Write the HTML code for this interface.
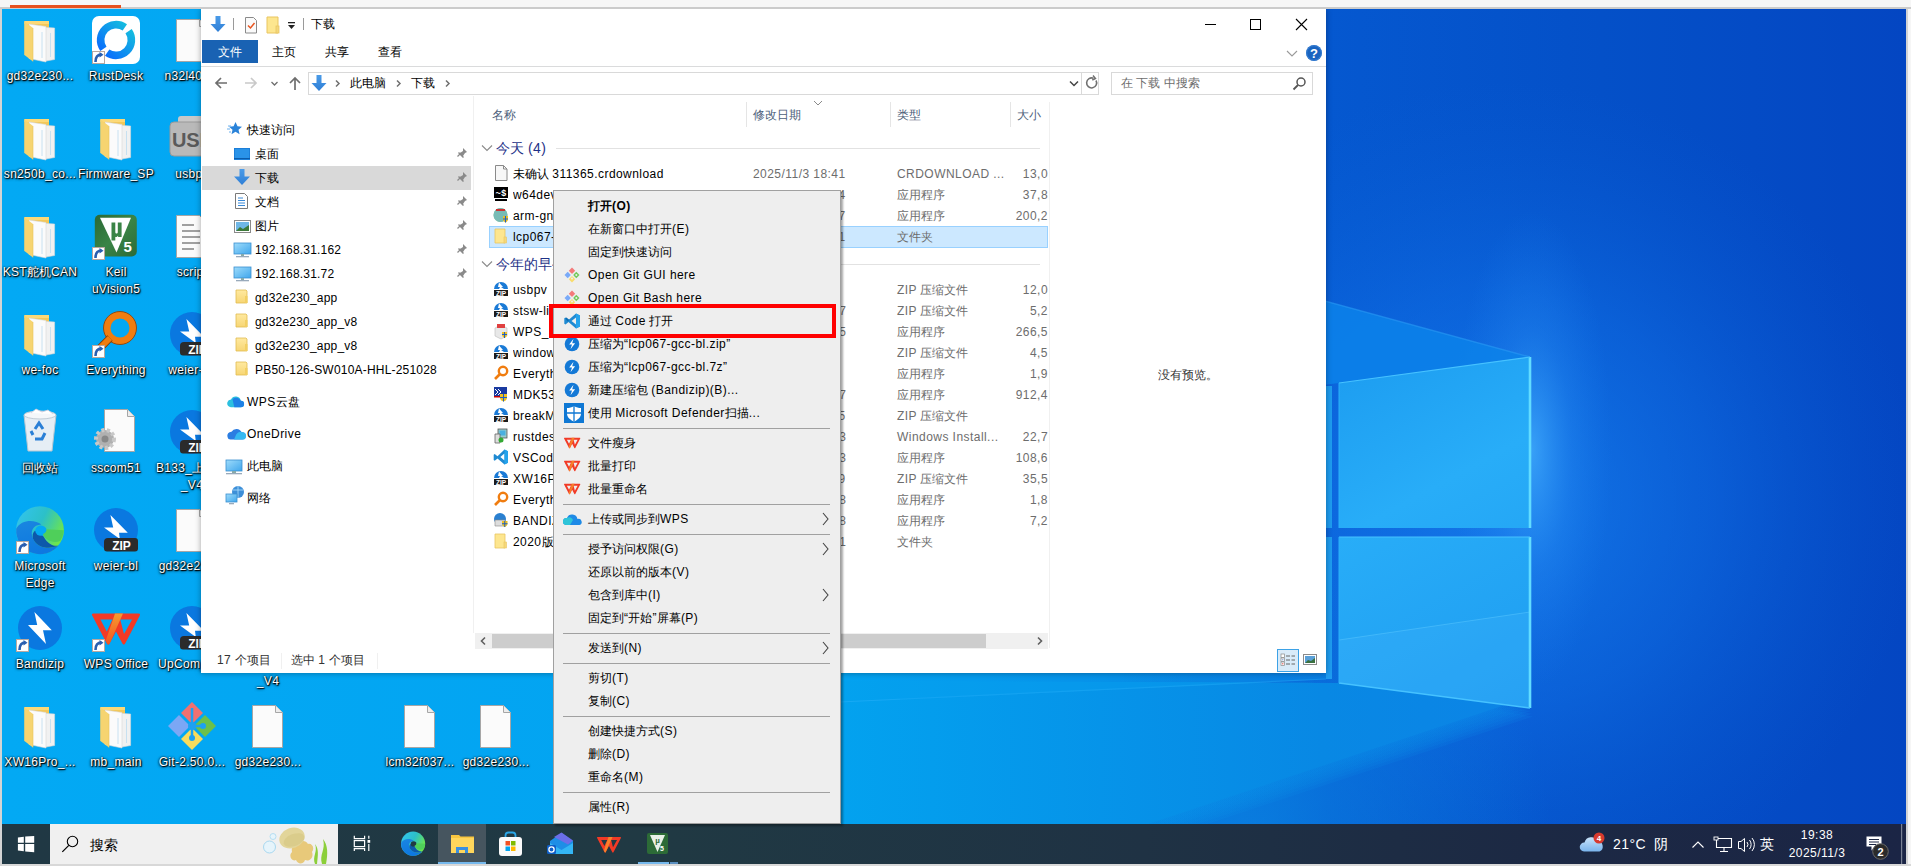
<!DOCTYPE html>
<html><head><meta charset="utf-8">
<style>
*{margin:0;padding:0;box-sizing:border-box}
html,body{width:1911px;height:866px;overflow:hidden;background:#f6f6f6;font-family:"Liberation Sans",sans-serif;font-size:12px;color:#000;letter-spacing:0}
.l{letter-spacing:0.45px}
.nv .l{letter-spacing:0.2px}
.dl .l{letter-spacing:0.3px}
.a{position:absolute}
.t{position:absolute;white-space:nowrap;line-height:16px}
.dl{position:absolute;width:80px;text-align:center;color:#fff;font-size:12px;line-height:17px;letter-spacing:0;text-shadow:0 0 2px #000,1px 1px 1px #000,0 1px 3px rgba(0,0,0,0.8)}
.nv{position:absolute;left:255px;white-space:nowrap;line-height:16px;letter-spacing:0;margin-top:1px}
.fr{position:absolute;white-space:nowrap;line-height:16px;margin-top:1px}
.g{color:#6d6d6d}
.mi{position:absolute;left:588px;white-space:nowrap;line-height:16px;color:#000}
.sep{position:absolute;left:563px;width:267px;height:1px;background:#a0a0a0}
.arr{position:absolute;left:821px;width:8px;height:8px;border-right:1px solid #333;border-top:1px solid #333;transform:rotate(45deg)}
</style></head><body>
<!-- top strip -->
<div class="a" style="left:0;top:7px;width:1911px;height:2px;background:#cbcbcb"></div>
<div class="a" style="left:10px;top:5px;width:111px;height:3px;background:#e8511d"></div>
<div class="a" style="left:1906px;top:8px;width:2px;height:856px;background:#d4d4d4"></div>

<!-- wallpaper -->
<svg class="a" style="left:2px;top:9px" width="1904" height="815" viewBox="2 9 1904 815">
<defs>
<linearGradient id="wb" x1="2" y1="0" x2="1906" y2="0" gradientUnits="userSpaceOnUse">
<stop offset="0" stop-color="#03a9f4"/>
<stop offset="0.445" stop-color="#03a2f0"/>
<stop offset="0.577" stop-color="#058ee6"/>
<stop offset="0.696" stop-color="#0558d0"/>
<stop offset="0.84" stop-color="#0450c8"/>
<stop offset="1" stop-color="#0446c2"/>
</linearGradient>
<linearGradient id="wdark" x1="0" y1="9" x2="0" y2="824" gradientUnits="userSpaceOnUse">
<stop offset="0" stop-color="#0448c4"/>
<stop offset="1" stop-color="#0a58cc"/>
</linearGradient>
<radialGradient id="glow" cx="1460" cy="520" r="330" gradientUnits="userSpaceOnUse">
<stop offset="0" stop-color="#2a9cff" stop-opacity="0.85"/>
<stop offset="0.45" stop-color="#1a80f0" stop-opacity="0.45"/>
<stop offset="1" stop-color="#1a80f0" stop-opacity="0"/>
</radialGradient>
<linearGradient id="pane" x1="1339" y1="357" x2="1530" y2="708" gradientUnits="userSpaceOnUse">
<stop offset="0" stop-color="#1c9cf0"/>
<stop offset="0.4" stop-color="#28adf8"/>
<stop offset="1" stop-color="#1e9cf0"/>
</linearGradient>
<linearGradient id="beamlo" x1="1530" y1="708" x2="1100" y2="824" gradientUnits="userSpaceOnUse">
<stop offset="0" stop-color="#1a9af0" stop-opacity="0.9"/>
<stop offset="1" stop-color="#0898ea" stop-opacity="0.6"/>
</linearGradient>
<filter id="bl" x="-10%" y="-10%" width="120%" height="120%"><feGaussianBlur stdDeviation="6"/></filter>
<filter id="bl3" x="-10%" y="-10%" width="120%" height="120%"><feGaussianBlur stdDeviation="2.5"/></filter>
<filter id="bl4" x="-10%" y="-10%" width="120%" height="120%"><feGaussianBlur stdDeviation="5"/></filter>
<filter id="bl2" x="-20%" y="-20%" width="140%" height="140%"><feGaussianBlur stdDeviation="25"/></filter>
</defs>
<rect x="2" y="9" width="1904" height="815" fill="url(#wdark)"/>
<rect x="2" y="9" width="1904" height="815" fill="url(#wb)"/>
<radialGradient id="bigglow" cx="1500" cy="500" r="420" gradientUnits="userSpaceOnUse"><stop offset="0" stop-color="#1a86f4" stop-opacity="0.75"/><stop offset="0.5" stop-color="#1478ee" stop-opacity="0.4"/><stop offset="1" stop-color="#0a60d8" stop-opacity="0"/></radialGradient>
<rect x="1080" y="80" width="840" height="750" fill="url(#bigglow)"/>
<radialGradient id="edgeglow" cx="1532" cy="450" r="80" gradientUnits="userSpaceOnUse" gradientTransform="translate(1532 450) scale(1 3) translate(-1532 -450)"><stop offset="0" stop-color="#48b4ff" stop-opacity="0.7"/><stop offset="0.5" stop-color="#2a90f5" stop-opacity="0.3"/><stop offset="1" stop-color="#1a80f0" stop-opacity="0"/></radialGradient>
<rect x="1450" y="210" width="170" height="480" fill="url(#edgeglow)"/>
<!-- upper beam -->
<polygon points="1200,267 1530,357 1339,383 1200,400" fill="#0c82ea" opacity="0.85"/>
<path d="M1200 267L1530 357" stroke="#2a9af5" stroke-width="1.5" opacity="0.6"/>
<!-- lower beam -->
<linearGradient id="lbg" x1="840" y1="0" x2="1530" y2="0" gradientUnits="userSpaceOnUse"><stop offset="0" stop-color="#03a2ef"/><stop offset="0.7" stop-color="#0888e4"/><stop offset="1" stop-color="#0c84e6"/></linearGradient>
<radialGradient id="brg" cx="1250" cy="830" r="300" gradientUnits="userSpaceOnUse"><stop offset="0" stop-color="#0a80e0" stop-opacity="0.8"/><stop offset="1" stop-color="#0a80e0" stop-opacity="0"/></radialGradient>
<rect x="950" y="530" width="600" height="300" fill="url(#brg)"/>
<polygon points="700,680 1339,683 1530,708 1100,840 700,840" fill="url(#lbg)" opacity="0.0"/>
<polygon points="700,680 1339,683 1527.2,699.5 1157.2,821.5 700,830" fill="url(#lbg)" opacity="0.2"/>
<polygon points="700,680 1339,683 1528.1,702.3 1158.1,824.3 700,830" fill="url(#lbg)" opacity="0.2"/>
<polygon points="700,680 1339,683 1529.1,705.1 1159.1,827.1 700,830" fill="url(#lbg)" opacity="0.2"/>
<polygon points="700,680 1339,683 1530.0,708.0 1160.0,830.0 700,830" fill="url(#lbg)" opacity="0.2"/>
<polygon points="700,680 1339,683 1530.9,710.9 1160.9,832.9 700,830" fill="url(#lbg)" opacity="0.2"/>
<polygon points="700,680 1339,683 1531.9,713.7 1161.9,835.7 700,830" fill="url(#lbg)" opacity="0.2"/>
<polygon points="700,680 1339,683 1532.8,716.5 1162.8,838.5 700,830" fill="url(#lbg)" opacity="0.2"/>
<polygon points="700,680 1339,683 1520,700 1130,830 700,830" fill="url(#lbg)"/>
<path d="M840 702L1326 679" stroke="#3ab8ff" stroke-width="1.2" opacity="0.35"/>
<!-- left panes bottom -->
<polygon points="900,700 1332,679 1332,537 900,537" fill="#0aa0f0" opacity="0.35"/>

<!-- panes -->
<polygon points="1339,383 1530,357 1530,528 1339,528" fill="url(#pane)"/>
<polygon points="1339,537 1530,537 1530,708 1339,683" fill="url(#pane)"/>
<polygon points="1339,640 1530,612 1530,708 1339,683" fill="#4ab8ff" opacity="0.22"/><path d="M1339 640L1530 612" stroke="#5ac8ff" stroke-width="1" opacity="0.5"/>
<path d="M1530 357V528M1530 537V708" stroke="#62dcff" stroke-width="2.6"/>
<path d="M1339 383L1530 357M1339 537H1530" stroke="#46c2ff" stroke-width="1.2"/>
<path d="M1339 683L1530 708" stroke="#46c2ff" stroke-width="1.5"/>
<path d="M1339 383V528M1339 537V683" stroke="#2ab0fa" stroke-width="1"/>
<rect x="1326" y="386" width="6" height="142" fill="#1e9cf0"/>
<rect x="1326" y="537" width="6" height="142" fill="#1e9cf0"/>
</svg>
<!-- desktop icons -->
<svg class="a" style="left:0;top:0" width="560" height="824">
<g transform="translate(16,15)">
<path d="M8.5 6h24.5v34h-24.5z" fill="#f2c85a"/>
<path d="M8.5 6h24.5v3h-24.5z" fill="#fcd978"/>
<path d="M17 11.5l21.6 1.5v31.5l-8.6 1.5l-13-3z" fill="#f1f1f1" stroke="#d6d6d6" stroke-width="0.6"/>
<path d="M13 9l17 2.5v35.5l-17-3.5z" fill="#fbfbfb" stroke="#d6d6d6" stroke-width="0.6"/>
<path d="M26 17v26M34.5 18v24" stroke="#bcdcf0" stroke-width="0.8"/>
<path d="M8.4 6.5l8.6 6.5v33.5l-8.6-6.5z" fill="#f6d470"/>
<path d="M17 13v33.5" stroke="#e9c35a" stroke-width="0.6"/>

</g>
<g transform="translate(92,16)"><defs><linearGradient id="rdg" x1="0" y1="1" x2="1" y2="0"><stop offset="0" stop-color="#0866ff"/><stop offset="1" stop-color="#16c4dc"/></linearGradient></defs>
<rect x="0" y="0" width="48" height="48" rx="7" fill="#fff"/>
<path d="M36.61 15.17A15.4 15.4 0 0 1 15.17 36.61M11.39 32.83A15.4 15.4 0 0 1 32.83 11.39" fill="none" stroke="url(#rdg)" stroke-width="7.6"/>
</g><g transform="translate(92,16)"><rect x="0.5" y="35.5" width="12" height="12" fill="#fff" stroke="#b8a8a0"/><path d="M3.5 46c0-5 2-7.5 6-7.5" fill="none" stroke="#2a5fb0" stroke-width="2.6"/><path d="M7.5 36l4 2.8l-4 2.8z" fill="#2a5fb0"/></g>
<g transform="translate(168,15)">
<path d="M8.5 4.5h23l7 7v35h-30z" fill="#fbfbfb" stroke="#a6a6a6"/>
<path d="M31.5 4.5v7h7" fill="#ececec" stroke="#a6a6a6"/>
</g>
<g transform="translate(16,113)">
<path d="M8.5 6h24.5v34h-24.5z" fill="#f2c85a"/>
<path d="M8.5 6h24.5v3h-24.5z" fill="#fcd978"/>
<path d="M17 11.5l21.6 1.5v31.5l-8.6 1.5l-13-3z" fill="#f1f1f1" stroke="#d6d6d6" stroke-width="0.6"/>
<path d="M13 9l17 2.5v35.5l-17-3.5z" fill="#fbfbfb" stroke="#d6d6d6" stroke-width="0.6"/>
<path d="M26 17v26M34.5 18v24" stroke="#bcdcf0" stroke-width="0.8"/>
<path d="M8.4 6.5l8.6 6.5v33.5l-8.6-6.5z" fill="#f6d470"/>
<path d="M17 13v33.5" stroke="#e9c35a" stroke-width="0.6"/>

</g>
<g transform="translate(92,113)">
<path d="M8.5 6h24.5v34h-24.5z" fill="#f2c85a"/>
<path d="M8.5 6h24.5v3h-24.5z" fill="#fcd978"/>
<path d="M17 11.5l21.6 1.5v31.5l-8.6 1.5l-13-3z" fill="#f1f1f1" stroke="#d6d6d6" stroke-width="0.6"/>
<path d="M13 9l17 2.5v35.5l-17-3.5z" fill="#fbfbfb" stroke="#d6d6d6" stroke-width="0.6"/>
<path d="M26 17v26M34.5 18v24" stroke="#bcdcf0" stroke-width="0.8"/>
<path d="M8.4 6.5l8.6 6.5v33.5l-8.6-6.5z" fill="#f6d470"/>
<path d="M17 13v33.5" stroke="#e9c35a" stroke-width="0.6"/>

</g>
<g transform="translate(168,114)"><rect x="10" y="2" width="28" height="8" rx="3" fill="#c8c8c8"/><rect x="2" y="8" width="46" height="34" rx="4" fill="#b9b9b9" stroke="#999"/>
<text x="25" y="33" text-anchor="middle" font-family="Liberation Sans" font-weight="bold" font-size="20" fill="#5a5a5a">USB</text></g>
<g transform="translate(16,211)">
<path d="M8.5 6h24.5v34h-24.5z" fill="#f2c85a"/>
<path d="M8.5 6h24.5v3h-24.5z" fill="#fcd978"/>
<path d="M17 11.5l21.6 1.5v31.5l-8.6 1.5l-13-3z" fill="#f1f1f1" stroke="#d6d6d6" stroke-width="0.6"/>
<path d="M13 9l17 2.5v35.5l-17-3.5z" fill="#fbfbfb" stroke="#d6d6d6" stroke-width="0.6"/>
<path d="M26 17v26M34.5 18v24" stroke="#bcdcf0" stroke-width="0.8"/>
<path d="M8.4 6.5l8.6 6.5v33.5l-8.6-6.5z" fill="#f6d470"/>
<path d="M17 13v33.5" stroke="#e9c35a" stroke-width="0.6"/>

</g>
<g transform="translate(92,212)"><defs><linearGradient id="klg" x1="0" y1="0" x2="1" y2="1"><stop offset="0" stop-color="#2a6834"/><stop offset="0.5" stop-color="#3a8446"/><stop offset="1" stop-color="#2c6a36"/></linearGradient></defs>
<rect x="2.8" y="2.8" width="42" height="41.7" rx="5" fill="url(#klg)"/>
<path d="M8 5.7H39L24.5 40.6Z" fill="#fff"/>
<path d="M19.5 10.5h3.8v9.5c0 2 2.5 2 2.5 0v-9.5h3.8v14.5h-3.5v-1.5c-1 1.5-2.5 1.8-2.8 1.2v3.8h-3.8z" fill="#3a8446"/>
<text x="35.6" y="40" text-anchor="middle" font-family="Liberation Sans" font-weight="bold" font-size="15" fill="#fff">5</text></g><g transform="translate(92,212)"><rect x="0.5" y="35.5" width="12" height="12" fill="#fff" stroke="#b8a8a0"/><path d="M3.5 46c0-5 2-7.5 6-7.5" fill="none" stroke="#2a5fb0" stroke-width="2.6"/><path d="M7.5 36l4 2.8l-4 2.8z" fill="#2a5fb0"/></g>
<g transform="translate(168,211)"><path d="M8.5 4.5h23l7 7v35h-30z" fill="#fbfbfb" stroke="#a6a6a6"/>
<path d="M14 14h12M14 20h18M14 26h18M14 32h18M14 38h12" stroke="#a0a0a0" stroke-width="2.2"/></g>
<g transform="translate(16,309)">
<path d="M8.5 6h24.5v34h-24.5z" fill="#f2c85a"/>
<path d="M8.5 6h24.5v3h-24.5z" fill="#fcd978"/>
<path d="M17 11.5l21.6 1.5v31.5l-8.6 1.5l-13-3z" fill="#f1f1f1" stroke="#d6d6d6" stroke-width="0.6"/>
<path d="M13 9l17 2.5v35.5l-17-3.5z" fill="#fbfbfb" stroke="#d6d6d6" stroke-width="0.6"/>
<path d="M26 17v26M34.5 18v24" stroke="#bcdcf0" stroke-width="0.8"/>
<path d="M8.4 6.5l8.6 6.5v33.5l-8.6-6.5z" fill="#f6d470"/>
<path d="M17 13v33.5" stroke="#e9c35a" stroke-width="0.6"/>

</g>
<g transform="translate(92,310)"><circle cx="28" cy="18" r="13" fill="none" stroke="#f07d10" stroke-width="7"/><circle cx="28" cy="18" r="16.5" fill="none" stroke="#8a3a00" stroke-width="0.8"/>
<path d="M18 28l-10 10" stroke="#8a3a00" stroke-width="7.5"/><path d="M18 28l-10 10" stroke="#f07d10" stroke-width="6"/></g><g transform="translate(92,310)"><rect x="0.5" y="35.5" width="12" height="12" fill="#fff" stroke="#b8a8a0"/><path d="M3.5 46c0-5 2-7.5 6-7.5" fill="none" stroke="#2a5fb0" stroke-width="2.6"/><path d="M7.5 36l4 2.8l-4 2.8z" fill="#2a5fb0"/></g>
<g transform="translate(168,310)"><circle cx="24" cy="24" r="22" fill="#0a78e0"/>
<path d="M18.4 9L35.8 26.7H27L27.8 33L12 21.4H21.2Z" fill="#fff"/>
<path d="M16 32H43a3 3 0 0 1 3 3v7.5a3 3 0 0 1-3 3H15a3 3 0 0 1-3-3V36a4 4 0 0 1 4-4z" fill="#2b2b2b"/>
<text x="29.5" y="43.5" text-anchor="middle" font-family="Liberation Sans" font-weight="bold" font-size="12" fill="#fff">ZIP</text></g>
<g transform="translate(16,407)"><path d="M8 8h32l-4 36h-24z" fill="#e6eef5" stroke="#b9c6d0"/><ellipse cx="24" cy="8" rx="16" ry="4" fill="#f4f7fa" stroke="#c0ccd6"/>
<path d="M15 6l5-4l6 3l6-2l5 4" fill="#fff" stroke="#ccd" stroke-width="0.8"/>
<path d="M19 22l4-6l4 6M29 26l-3 6h-7M17 28l-2-4" fill="none" stroke="#2a7fd6" stroke-width="3"/></g>
<g transform="translate(92,407)"><path d="M12.5 2.5h23l7 7v35h-30z" fill="#fbfbfb" stroke="#a6a6a6"/><path d="M35.5 2.5v7h7" fill="#ececec" stroke="#a6a6a6"/>
<circle cx="13" cy="32" r="9" fill="#b0b0b0" stroke="#c8c8c8" stroke-width="4" stroke-dasharray="3 2.5"/><circle cx="13" cy="32" r="3.5" fill="#888"/></g>
<g transform="translate(168,408)"><circle cx="24" cy="24" r="22" fill="#0a78e0"/>
<path d="M18.4 9L35.8 26.7H27L27.8 33L12 21.4H21.2Z" fill="#fff"/>
<path d="M16 32H43a3 3 0 0 1 3 3v7.5a3 3 0 0 1-3 3H15a3 3 0 0 1-3-3V36a4 4 0 0 1 4-4z" fill="#2b2b2b"/>
<text x="29.5" y="43.5" text-anchor="middle" font-family="Liberation Sans" font-weight="bold" font-size="12" fill="#fff">ZIP</text></g>
<g transform="translate(16,506) scale(1.98)">
<circle cx="12.1" cy="12.2" r="12.1" fill="url(#teg)"/>
<path d="M0.1 11.5A12.1 12.1 0 0 0 21.5 20C17 22 11 21.5 8.6 16.5C7 13 8.5 9.5 12.8 9.4C9.5 6.6 2.5 6.8 0.1 11.5Z" fill="url(#teb)"/>
<path d="M8.6 16.5C11 21.5 17 22 21.5 20C19.5 20.5 16 19.5 14 15.5C12.5 14 11 12.5 9.5 12.5C8.4 13.5 8.2 15 8.6 16.5Z" fill="#0d58aa"/>
<ellipse cx="12.6" cy="12.4" rx="2.9" ry="2.6" fill="#03a9f4"/>
<path d="M13.6 14.2C15 17.8 19.5 19 22.4 17.5A12.1 12.1 0 0 0 24.2 12.2L15.4 11.8C15.6 12.8 14.8 13.8 13.6 14.2Z" fill="#4fcf5a"/>
</g><g transform="translate(16,506)"><rect x="0.5" y="35.5" width="12" height="12" fill="#fff" stroke="#b8a8a0"/><path d="M3.5 46c0-5 2-7.5 6-7.5" fill="none" stroke="#2a5fb0" stroke-width="2.6"/><path d="M7.5 36l4 2.8l-4 2.8z" fill="#2a5fb0"/></g>
<g transform="translate(92,506)"><circle cx="24" cy="24" r="22" fill="#0a78e0"/>
<path d="M18.4 9L35.8 26.7H27L27.8 33L12 21.4H21.2Z" fill="#fff"/>
<path d="M16 32H43a3 3 0 0 1 3 3v7.5a3 3 0 0 1-3 3H15a3 3 0 0 1-3-3V36a4 4 0 0 1 4-4z" fill="#2b2b2b"/>
<text x="29.5" y="43.5" text-anchor="middle" font-family="Liberation Sans" font-weight="bold" font-size="12" fill="#fff">ZIP</text></g>
<g transform="translate(168,505)">
<path d="M8.5 4.5h23l7 7v35h-30z" fill="#fbfbfb" stroke="#a6a6a6"/>
<path d="M31.5 4.5v7h7" fill="#ececec" stroke="#a6a6a6"/>
</g>
<g transform="translate(16,604)"><circle cx="24" cy="24" r="22" fill="#0a78e0"/>
<path d="M18.4 8L35.8 26.2H27L30 40L12 21H21.2Z" fill="#fff"/></g><g transform="translate(16,604)"><rect x="0.5" y="35.5" width="12" height="12" fill="#fff" stroke="#b8a8a0"/><path d="M3.5 46c0-5 2-7.5 6-7.5" fill="none" stroke="#2a5fb0" stroke-width="2.6"/><path d="M7.5 36l4 2.8l-4 2.8z" fill="#2a5fb0"/></g>
<g transform="translate(92,604)"><defs><linearGradient id="wpso" x1="0" y1="0" x2="0" y2="1"><stop offset="0" stop-color="#f79a30"/><stop offset="1" stop-color="#f25520"/></linearGradient></defs>
<path fill-rule="evenodd" d="M1.5 9.4H46.5Q48.8 9.4 47.8 11.5L33.2 39.5Q31.8 41.8 30.4 39.5L24 27.5L17.6 39.5Q16.2 41.8 14.8 39.5L0.2 11.5Q-0.8 9.4 1.5 9.4ZM8.4 15.6H20.5L14.8 27.5ZM28.2 15.6H40.1L32 30Z" fill="#f23a26"/>
<path d="M23 9.4H31L17.6 39.5Q16.4 41.5 15.2 39.6L13.8 36.5Z" fill="url(#wpso)"/>
</g><g transform="translate(92,604)"><rect x="0.5" y="35.5" width="12" height="12" fill="#fff" stroke="#b8a8a0"/><path d="M3.5 46c0-5 2-7.5 6-7.5" fill="none" stroke="#2a5fb0" stroke-width="2.6"/><path d="M7.5 36l4 2.8l-4 2.8z" fill="#2a5fb0"/></g>
<g transform="translate(168,604)"><circle cx="24" cy="24" r="22" fill="#0a78e0"/>
<path d="M18.4 9L35.8 26.7H27L27.8 33L12 21.4H21.2Z" fill="#fff"/>
<path d="M16 32H43a3 3 0 0 1 3 3v7.5a3 3 0 0 1-3 3H15a3 3 0 0 1-3-3V36a4 4 0 0 1 4-4z" fill="#2b2b2b"/>
<text x="29.5" y="43.5" text-anchor="middle" font-family="Liberation Sans" font-weight="bold" font-size="12" fill="#fff">ZIP</text></g>
<g transform="translate(16,701)">
<path d="M8.5 6h24.5v34h-24.5z" fill="#f2c85a"/>
<path d="M8.5 6h24.5v3h-24.5z" fill="#fcd978"/>
<path d="M17 11.5l21.6 1.5v31.5l-8.6 1.5l-13-3z" fill="#f1f1f1" stroke="#d6d6d6" stroke-width="0.6"/>
<path d="M13 9l17 2.5v35.5l-17-3.5z" fill="#fbfbfb" stroke="#d6d6d6" stroke-width="0.6"/>
<path d="M26 17v26M34.5 18v24" stroke="#bcdcf0" stroke-width="0.8"/>
<path d="M8.4 6.5l8.6 6.5v33.5l-8.6-6.5z" fill="#f6d470"/>
<path d="M17 13v33.5" stroke="#e9c35a" stroke-width="0.6"/>

</g>
<g transform="translate(92,701)">
<path d="M8.5 6h24.5v34h-24.5z" fill="#f2c85a"/>
<path d="M8.5 6h24.5v3h-24.5z" fill="#fcd978"/>
<path d="M17 11.5l21.6 1.5v31.5l-8.6 1.5l-13-3z" fill="#f1f1f1" stroke="#d6d6d6" stroke-width="0.6"/>
<path d="M13 9l17 2.5v35.5l-17-3.5z" fill="#fbfbfb" stroke="#d6d6d6" stroke-width="0.6"/>
<path d="M26 17v26M34.5 18v24" stroke="#bcdcf0" stroke-width="0.8"/>
<path d="M8.4 6.5l8.6 6.5v33.5l-8.6-6.5z" fill="#f6d470"/>
<path d="M17 13v33.5" stroke="#e9c35a" stroke-width="0.6"/>

</g>
<g transform="translate(168,702)">
<path d="M24 0l11 11l-11 11l-11-11z" fill="#f07171"/><path d="M37 13l11 11l-11 11l-11-11z" fill="#6cc04a"/><path d="M24 26l11 11l-11 11l-11-11z" fill="#f9dc5c"/><path d="M11 13l11 11l-11 11l-11-11z" fill="#7ba7f5"/>
<circle cx="24" cy="24" r="4" fill="#1da1f2"/><circle cx="35" cy="24" r="3" fill="#1da1f2"/><circle cx="24" cy="36" r="3" fill="#1da1f2"/><path d="M24 6v30M24 24h11" stroke="#1da1f2" stroke-width="2.5"/></g>
<g transform="translate(244,701)">
<path d="M8.5 4.5h23l7 7v35h-30z" fill="#fbfbfb" stroke="#a6a6a6"/>
<path d="M31.5 4.5v7h7" fill="#ececec" stroke="#a6a6a6"/>
</g>
<g transform="translate(396,701)">
<path d="M8.5 4.5h23l7 7v35h-30z" fill="#fbfbfb" stroke="#a6a6a6"/>
<path d="M31.5 4.5v7h7" fill="#ececec" stroke="#a6a6a6"/>
</g>
<g transform="translate(472,701)">
<path d="M8.5 4.5h23l7 7v35h-30z" fill="#fbfbfb" stroke="#a6a6a6"/>
<path d="M31.5 4.5v7h7" fill="#ececec" stroke="#a6a6a6"/>
</g>
</svg>
<div class="dl" style="left:0px;top:68px"><span class="l">gd32e230...</span></div>
<div class="dl" style="left:76px;top:68px"><span class="l">RustDesk</span></div>
<div class="dl" style="left:152px;top:68px"><span class="l">n32l40x...</span></div>
<div class="dl" style="left:0px;top:166px"><span class="l">sn250b_co...</span></div>
<div class="dl" style="left:76px;top:166px"><span class="l">Firmware_SP</span></div>
<div class="dl" style="left:152px;top:166px"><span class="l">usbpv</span></div>
<div class="dl" style="left:0px;top:264px"><span class="l">KST</span>舵机<span class="l">CAN</span></div>
<div class="dl" style="left:76px;top:264px"><span class="l">Keil</span></div>
<div class="dl" style="left:76px;top:281px"><span class="l">uVision5</span></div>
<div class="dl" style="left:152px;top:264px"><span class="l">script</span></div>
<div class="dl" style="left:0px;top:362px"><span class="l">we-foc</span></div>
<div class="dl" style="left:76px;top:362px"><span class="l">Everything</span></div>
<div class="dl" style="left:152px;top:362px"><span class="l">weier-all</span></div>
<div class="dl" style="left:0px;top:460px">回收站</div>
<div class="dl" style="left:76px;top:460px"><span class="l">sscom51</span></div>
<div class="dl" style="left:152px;top:460px"><span class="l">B133_</span>上位机</div>
<div class="dl" style="left:152px;top:477px"><span class="l">_V4</span></div>
<div class="dl" style="left:0px;top:558px"><span class="l">Microsoft</span></div>
<div class="dl" style="left:0px;top:575px"><span class="l">Edge</span></div>
<div class="dl" style="left:76px;top:558px"><span class="l">weier-bl</span></div>
<div class="dl" style="left:152px;top:558px"><span class="l">gd32e230...</span></div>
<div class="dl" style="left:0px;top:656px"><span class="l">Bandizip</span></div>
<div class="dl" style="left:76px;top:656px"><span class="l">WPS</span> <span class="l">Office</span></div>
<div class="dl" style="left:158px;top:656px;text-align:left;width:120px"><span class="l">UpComputer</span></div>
<div class="dl" style="left:228px;top:673px"><span class="l">_V4</span></div>
<div class="dl" style="left:0px;top:754px"><span class="l">XW16Pro_...</span></div>
<div class="dl" style="left:76px;top:754px"><span class="l">mb_main</span></div>
<div class="dl" style="left:152px;top:754px"><span class="l">Git-2.50.0...</span></div>
<div class="dl" style="left:228px;top:754px"><span class="l">gd32e230...</span></div>
<div class="dl" style="left:380px;top:754px"><span class="l">lcm32f037...</span></div>
<div class="dl" style="left:456px;top:754px"><span class="l">gd32e230...</span></div>
<!-- /desktop icons -->
<!-- taskbar -->
<div class="a" style="left:2px;top:824px;width:1904px;height:40px;background:linear-gradient(90deg,#203844 0%,#203943 35%,#1f3244 60%,#1c2944 80%,#1b2545 100%)"></div>
<div class="a" style="left:0;top:864px;width:1911px;height:2px;background:#d8d8d8"></div>
<div class="a" style="left:0;top:9px;width:2px;height:857px;background:#d4d4d4"></div>
<svg class="a" style="left:2px;top:824px" width="700" height="40">
<path d="M15.9 13.6L21.8 12.8V18.7H15.9ZM23.2 12.6L32.2 11.9V18.7H23.2ZM15.9 20.1H21.8V27.2L15.9 26.4ZM23.2 20.1H32.2V28.2L23.2 27.4Z" fill="#fff"/>
<rect x="48" y="0" width="288" height="40" fill="#f0f0f0"/>
<circle cx="70.5" cy="17.5" r="5.2" fill="none" stroke="#000" stroke-width="1.1"/>
<path d="M66.8 21.3l-6.5 6.5" stroke="#000" stroke-width="1.2"/>
<!-- jellyfish -->
<circle cx="267.5" cy="23" r="6" fill="#e6f4fb" stroke="#a8d8f0" stroke-width="1"/>
<circle cx="271" cy="12.5" r="3" fill="#e6f4fb" stroke="#a8d8f0" stroke-width="0.8"/>
<path d="M290 28c-4 4 0 10 4 8c2 5 8 4 9 0c5 2 9-3 7-8c3-4 0-9-4-8c-2-4-8-4-10 0c-4-1-7 3-6 8z" fill="#e8c97a"/>
<ellipse cx="290" cy="14" rx="13" ry="10" transform="rotate(-20 290 14)" fill="#e2d59a"/>
<ellipse cx="292" cy="16" rx="11" ry="6" transform="rotate(-20 292 16)" fill="#d6c682" opacity="0.6"/>
<path d="M313 40c-3-8 3-12 0-20c4 5 3 11 2 20zM320 40c-3-10 4-14 1-25c5 6 5 15 3 25z" fill="#8ccf3a"/>
<!-- task view -->
<path d="M352.3 11.8V14.6H362.6V11.8M352.3 27V24.6H362.6V27M366.8 11.8V14.8M366.8 20V27" fill="none" stroke="#fff" stroke-width="1.2"/>
<rect x="352.3" y="16.6" width="10.3" height="6" fill="none" stroke="#fff" stroke-width="1.2"/>
<rect x="365.5" y="16" width="2.7" height="2.8" fill="#fff"/>
<!-- edge -->
<defs>
<linearGradient id="teg" x1="0" y1="0" x2="1" y2="0.5"><stop offset="0" stop-color="#33c4f2"/><stop offset="0.55" stop-color="#2cc0c8"/><stop offset="1" stop-color="#6ee64a"/></linearGradient>
<linearGradient id="teb" x1="0" y1="0" x2="0.3" y2="1"><stop offset="0" stop-color="#1a86e0"/><stop offset="1" stop-color="#0e78e0"/></linearGradient>
</defs>
<g transform="translate(399,7.5)">
<circle cx="12.1" cy="12.2" r="12.1" fill="url(#teg)"/>
<path d="M0.1 11.5A12.1 12.1 0 0 0 21.5 20C17 22 11 21.5 8.6 16.5C7 13 8.5 9.5 12.8 9.4C9.5 6.6 2.5 6.8 0.1 11.5Z" fill="url(#teb)"/>
<path d="M8.6 16.5C11 21.5 17 22 21.5 20C19.5 20.5 16 19.5 14 15.5C12.5 14 11 12.5 9.5 12.5C8.4 13.5 8.2 15 8.6 16.5Z" fill="#0d58aa"/>
<ellipse cx="12.6" cy="12.4" rx="2.9" ry="2.6" fill="#203943"/>
<path d="M13.6 14.2C15 17.8 19.5 19 22.4 17.5A12.1 12.1 0 0 0 24.2 12.2L15.4 11.8C15.6 12.8 14.8 13.8 13.6 14.2Z" fill="#4fcf5a"/>
</g>
<!-- explorer active -->
<rect x="436" y="0" width="48" height="40" fill="#46555f"/>
<rect x="436" y="38" width="48" height="2" fill="#76b9ed"/>
<path d="M449 11h8l1.5 1.5h13.5v16.5h-23z" fill="#f8c640"/>
<rect x="449" y="14" width="23" height="15" fill="#ffd65c"/>
<path d="M454 29v-6h12v6h-3v-3h-6v3z" fill="#3a8fe0"/>
<!-- store -->
<path d="M503.5 14v-2.5a3 3 0 0 1 3-3h4a3 3 0 0 1 3 3v2.5" fill="none" stroke="#2aa6e8" stroke-width="1.8"/>
<rect x="497" y="13" width="23" height="19" rx="3" fill="#fafafa"/>
<rect x="503.5" y="17" width="4.5" height="4.5" fill="#f25022"/><rect x="509" y="17" width="4.5" height="4.5" fill="#7fba00"/>
<rect x="503.5" y="22.5" width="4.5" height="4.5" fill="#00a4ef"/><rect x="509" y="22.5" width="4.5" height="4.5" fill="#ffb900"/>
<!-- outlook -->
<path d="M548 17l11.5-8l11.5 8v13h-23z" fill="#1e8ee6"/>
<path d="M552 13l7.5-4.5l11.5 8l-5 4z" fill="#6b6ee8"/>
<path d="M548 19l11.5 7l11.5-7v11h-23z" fill="#34b6f5"/>
<rect x="545" y="21" width="9" height="9" rx="1.5" fill="#0f5fc8"/>
<circle cx="549.5" cy="25.5" r="2.6" fill="none" stroke="#fff" stroke-width="1.3"/>
<!-- wps -->
<g transform="translate(595,8.3) scale(0.5)">
<path fill-rule="evenodd" d="M1.5 9.4H46.5Q48.8 9.4 47.8 11.5L33.2 39.5Q31.8 41.8 30.4 39.5L24 27.5L17.6 39.5Q16.2 41.8 14.8 39.5L0.2 11.5Q-0.8 9.4 1.5 9.4ZM8.4 15.6H20.5L14.8 27.5ZM28.2 15.6H40.1L32 30Z" fill="#f23a26"/>
<path d="M23 9.4H31L17.6 39.5Q16.4 41.5 15.2 39.6L13.8 36.5Z" fill="#f7802a"/>
</g>
<!-- keil -->
<rect x="645" y="9" width="21" height="21" rx="2" fill="#2c6b37"/>
<path d="M648 11h15l-7.5 17z" fill="#e8f0e8"/>
<text x="655.5" y="19" text-anchor="middle" font-family="Liberation Sans" font-weight="bold" font-size="8" fill="#2c6b37">µ</text>
<text x="660" y="27" text-anchor="middle" font-family="Liberation Sans" font-weight="bold" font-size="7" fill="#fff">5</text>
<rect x="636" y="38" width="31" height="2" fill="#76b9ed"/><rect x="668" y="38" width="8" height="2" fill="#5a8fc0"/>
</svg>
<div class="t" style="left:90px;top:836px;font-size:14px;line-height:18px;color:#000">搜索</div>
<!-- tray -->
<svg class="a" style="left:1570px;top:824px" width="336" height="40">
<defs><linearGradient id="cld" x1="0" y1="0" x2="0" y2="1"><stop offset="0" stop-color="#c9e4fb"/><stop offset="1" stop-color="#7ab4ec"/></linearGradient></defs>
<path d="M14 27.5a4.5 4.5 0 0 1 0.5-9a7 7 0 0 1 13-1.5a5.5 5.5 0 0 1 2 10.5z" fill="url(#cld)"/>
<circle cx="29" cy="14" r="5.5" fill="#d73a2e"/>
<text x="29" y="17" text-anchor="middle" font-family="Liberation Sans" font-weight="bold" font-size="8" fill="#fff">4</text>
<path d="M122.5 23.5l5.5-5.5l5.5 5.5" fill="none" stroke="#fff" stroke-width="1.1"/>
<path d="M146.5 14.5h15v9h-15zM154 23.5v3.5M150 27.5h8" fill="none" stroke="#fff" stroke-width="1.1"/>
<rect x="144" y="13" width="4" height="3" fill="#1c2744" stroke="#fff" stroke-width="0.9"/>
<path d="M168.5 17.5h2.5l3.5-3v13l-3.5-3h-2.5z" fill="none" stroke="#fff" stroke-width="1"/>
<path d="M177 18a4 4 0 0 1 0 5M179.5 16a7 7 0 0 1 0 9M182 14a10 10 0 0 1 0 13" fill="none" stroke="#fff" stroke-width="1"/>
<rect x="331" y="0" width="1.2" height="40" fill="#7a8294"/>
<path d="M296.5 12.5h15v10h-6l-4 4v-4h-5z" fill="#fff"/>
<path d="M299 15.5h10M299 18h10M299 20.5h7" stroke="#1c2744" stroke-width="1"/>
<circle cx="310.5" cy="27.5" r="7.8" fill="#2b2b2b" stroke="#6a6a6a" stroke-width="1"/>
<text x="310.5" y="31.5" text-anchor="middle" font-family="Liberation Sans" font-weight="bold" font-size="11" fill="#fff">2</text>
</svg>
<div class="t" style="left:1613px;top:835px;font-size:14px;line-height:18px;color:#fff"><span class="l">21°C&nbsp;</span> 阴</div>
<div class="t" style="left:1760px;top:835px;font-size:14px;line-height:18px;color:#fff">英</div>
<div class="t" style="left:1787px;top:827px;width:60px;text-align:center;color:#fff"><span class="l">19:38</span></div>
<div class="t" style="left:1777px;top:845px;width:80px;text-align:center;color:#fff"><span class="l">2025/11/3</span></div>
<!-- explorer window -->
<div id="win" class="a" style="left:201px;top:9px;width:1125px;height:664px;background:#fff;box-shadow:0 0 6px rgba(0,0,0,0.35)"></div>
<!-- title bar -->
<svg class="a" style="left:201px;top:9px" width="140" height="30">
<defs><linearGradient id="dla" x1="0" y1="0" x2="0" y2="1"><stop offset="0" stop-color="#4a9be8"/><stop offset="1" stop-color="#2f7fd6"/></linearGradient></defs>
<path d="M14.5 7h5v8h5l-7.5 8l-7.5-8h5z" fill="url(#dla)"/>
<rect x="32" y="9" width="1" height="12" fill="#9a9a9a"/>
<path d="M44.5 8.5h8l3 3v12.5h-11z" fill="#fafafa" stroke="#8a8a8a"/>
<path d="M47 16.5l2.5 2.5l4-5" fill="none" stroke="#e8541f" stroke-width="1.5"/>
<path d="M66 8h11v16h-11z" fill="#fde68f" stroke="#e9c561" stroke-width="1"/>
<rect x="75" y="17" width="3" height="7" fill="#f3d77c" stroke="#e9c561" stroke-width="0.8"/>
<rect x="87" y="13" width="7" height="1.3" fill="#222"/>
<path d="M87 16h7l-3.5 4z" fill="#222"/>
<rect x="102" y="9" width="1" height="12" fill="#9a9a9a"/>
</svg>
<div class="t" style="left:311px;top:16px">下载</div>
<svg class="a" style="left:1190px;top:9px" width="136" height="30">
<rect x="15" y="15" width="11" height="1" fill="#000"/>
<rect x="60.5" y="10.5" width="10" height="10" fill="none" stroke="#000"/>
<path d="M106 10l11 11M117 10l-11 11" stroke="#000" stroke-width="1.1"/>
</svg>
<!-- ribbon -->
<div class="a" style="left:202px;top:40px;width:56px;height:23px;background:#1962b3"></div>
<div class="t" style="left:218px;top:44px;color:#fff">文件</div>
<div class="t" style="left:272px;top:44px">主页</div>
<div class="t" style="left:325px;top:44px">共享</div>
<div class="t" style="left:378px;top:44px">查看</div>
<svg class="a" style="left:1280px;top:42px" width="46" height="24">
<path d="M7 9l5 5l5-5" fill="none" stroke="#9a9a9a" stroke-width="1.1"/>
<circle cx="34" cy="11" r="8" fill="#1a64c0"/>
<circle cx="34" cy="11" r="7.3" fill="none" stroke="#3d85d8" stroke-width="0.8"/>
<text x="34" y="16" text-anchor="middle" font-family="Liberation Sans" font-weight="bold" font-size="13" fill="#fff">?</text>
</svg>
<div class="a" style="left:201px;top:66px;width:1125px;height:1px;background:#dadbdc"></div>
<!-- nav bar -->
<svg class="a" style="left:205px;top:72px" width="100" height="24">
<path d="M11 11h11M16 6l-5 5l5 5" fill="none" stroke="#6e6e6e" stroke-width="1.7"/>
<path d="M40 11h11M46 6l5 5l-5 5" fill="none" stroke="#c9c9c9" stroke-width="1.7"/>
<path d="M66.5 10l3 3l3-3" fill="none" stroke="#6e6e6e" stroke-width="1.3"/>
<path d="M90 18V6M85 11l5-5l5 5" fill="none" stroke="#6e6e6e" stroke-width="1.7"/>
</svg>
<div class="a" style="left:308px;top:72px;width:791px;height:23px;border:1px solid #d9d9d9"></div>
<div class="a" style="left:1081px;top:73px;width:1px;height:21px;background:#d9d9d9"></div>
<svg class="a" style="left:308px;top:72px" width="150" height="23">
<path d="M8.5 3h5v8h5l-7.5 8l-7.5-8h5z" fill="url(#dla)"/>
<path d="M28 8.5l3 3l-3 3" fill="none" stroke="#707070" stroke-width="1.5"/>
<path d="M89 8.5l3 3l-3 3" fill="none" stroke="#707070" stroke-width="1.5"/>
<path d="M138 8.5l3 3l-3 3" fill="none" stroke="#707070" stroke-width="1.5"/>
</svg>
<div class="t" style="left:350px;top:75px">此电脑</div>
<div class="t" style="left:411px;top:75px">下载</div>
<svg class="a" style="left:1060px;top:72px" width="40" height="23">
<path d="M10 9.5l4 4l4-4" fill="none" stroke="#444" stroke-width="1.5"/>
<path d="M36 8.5a5 5 0 1 1-2.5-2.2" fill="none" stroke="#707070" stroke-width="1.6"/>
<path d="M33 3.5l2.5 3l-3.2 1.5" fill="none" stroke="#707070" stroke-width="1.4"/>
</svg>
<div class="a" style="left:1111px;top:72px;width:202px;height:23px;border:1px solid #d9d9d9"></div>
<div class="t" style="left:1121px;top:75px;color:#6d6d6d">在 下载 中搜索</div>
<svg class="a" style="left:1290px;top:74px" width="20" height="20">
<circle cx="11" cy="8" r="4" fill="none" stroke="#555" stroke-width="1.5"/>
<path d="M8 11l-4.5 4.5" stroke="#555" stroke-width="1.8"/>
</svg>

<!-- nav pane -->
<div class="a" style="left:473px;top:96px;width:1px;height:537px;background:#f0f0f0"></div>
<div class="a" style="left:202px;top:166px;width:269px;height:24px;background:#d9d9d9"></div>
<svg class="a" style="left:220px;top:110px" width="256" height="400">
<defs>
<linearGradient id="mon" x1="0" y1="0" x2="1" y2="1"><stop offset="0" stop-color="#9fdcfb"/><stop offset="1" stop-color="#3fa6ec"/></linearGradient>
<linearGradient id="fold" x1="0" y1="0" x2="0" y2="1"><stop offset="0" stop-color="#ffe9a0"/><stop offset="1" stop-color="#f7d674"/></linearGradient>
</defs>
<!-- star -->
<path d="M15.5 12l2 4.3l4.5.4l-3.5 3l1.1 4.5l-4.1-2.4l-4 2.4l1-4.5l-3.4-3l4.5-.4z" fill="#2a83d9"/>
<path d="M8 16h3M7 19h3M9 22h2" stroke="#6ab0ee" stroke-width="1"/>
<!-- desktop -->
<rect x="14" y="38" width="16" height="12" fill="#1c7ed8"/>
<rect x="15" y="39" width="14" height="10" fill="#2a93e8"/>
<rect x="14" y="48" width="16" height="1" fill="#0b5cab"/>
<!-- download -->
<path d="M19.5 59h5v7.5h5.5l-8 8.5l-8-8.5h5.5z" fill="url(#dla)"/>
<!-- doc -->
<path d="M15.5 83.5h9l3 3v12h-12z" fill="#fff" stroke="#7a7a7a"/>
<path d="M18 88h5M18 90.5h7M18 93h7M18 95.5h7" stroke="#3a8ad8" stroke-width="1"/>
<!-- pictures -->
<rect x="14.5" y="110.5" width="16" height="12" fill="#fff" stroke="#8a8a8a"/>
<rect x="16" y="112" width="13" height="9" fill="#6fb7e6"/>
<path d="M16 121l4-4l3 2l6-4v6z" fill="#3d7a3a"/>
<!-- monitors -->
<g id="mn"><rect x="14" y="133" width="17" height="11" fill="url(#mon)" stroke="#3a8fd0" stroke-width="0.8"/><rect x="21" y="144" width="3" height="2" fill="#8aa"/><rect x="16" y="146" width="13" height="1.3" fill="#9ab"/></g>
<use href="#mn" y="24"/>
<!-- folders -->
<g id="fd"><path d="M16 180h10l1 1v12h-11z" fill="url(#fold)" stroke="#e1bb52" stroke-width="0.8"/><rect x="25" y="186" width="2.5" height="7" fill="#f2cf63"/></g>
<use href="#fd" y="24"/><use href="#fd" y="48"/><use href="#fd" y="72"/>
<!-- wps cloud -->
<path d="M9 296.5a3.8 3.8 0 0 1 2-7a5.2 5.2 0 0 1 9.8 1.2a3.3 3.3 0 0 1 0 6.6h-9.3a3 3 0 0 1-2.5-0.8z" fill="#2bc0e0"/>
<path d="M12.5 289.2a5.2 5.2 0 0 1 8.3 1.5a3.3 3.3 0 0 1 0 6.6h-6.5z" fill="#1e80e6"/>
<!-- onedrive -->
<path d="M7.5 327a4 4 0 0 1 4-5.2a5.8 5.8 0 0 1 10.2 0.5a3.6 3.6 0 0 1 0.8 7.2h-12a3 3 0 0 1-3-2.5z" fill="#2b7de2"/>
<path d="M14 329.5h8.5a3.6 3.6 0 0 0 0-7.2a5 5 0 0 0-6.2 2z" fill="#35b8f2"/>
<!-- this pc -->
<rect x="6" y="350" width="16" height="11" fill="url(#mon)" stroke="#3a8fd0" stroke-width="0.8"/>
<rect x="12" y="361" width="4" height="2" fill="#8aa"/><rect x="6" y="363" width="16" height="1.3" fill="#9ab"/>
<!-- network -->
<circle cx="18" cy="382" r="6" fill="#3d8fd8"/><path d="M13 380h10M18 376v12" stroke="#aee0ff" stroke-width="0.8"/>
<rect x="6" y="384" width="11" height="8" fill="url(#mon)" stroke="#3a8fd0" stroke-width="0.8"/>
<rect x="9" y="393" width="5" height="1.3" fill="#9ab"/>
<!-- pins -->
<g id="pin" fill="#8a8a8a" transform="translate(5,-10)"><path d="M238 48l4 4l-2 1l-2 3l1 1l-1 1l-5-5l1-1l1 1l3-2z"/><path d="M236 53l-3.5 3.5" stroke="#8a8a8a" stroke-width="1.2"/></g>
<use href="#pin" y="24"/><use href="#pin" y="48"/><use href="#pin" y="72"/><use href="#pin" y="96"/><use href="#pin" y="120"/>
</svg>
<div class="t" style="left:247px;top:122px">快速访问</div>
<div class="nv" style="top:145px">桌面</div>
<div class="nv" style="top:169px">下载</div>
<div class="nv" style="top:193px">文档</div>
<div class="nv" style="top:217px">图片</div>
<div class="nv" style="top:241px"><span class="l">192.168.31.162</span></div>
<div class="nv" style="top:265px"><span class="l">192.168.31.72</span></div>
<div class="nv" style="top:289px"><span class="l">gd32e230_app</span></div>
<div class="nv" style="top:313px"><span class="l">gd32e230_app_v8</span></div>
<div class="nv" style="top:337px"><span class="l">gd32e230_app_v8</span></div>
<div class="nv" style="top:361px"><span class="l">PB50-126-SW010A-HHL-251028</span></div>
<div class="t" style="left:247px;top:394px"><span class="l">WPS</span>云盘</div>
<div class="t" style="left:247px;top:426px"><span class="l">OneDrive</span></div>
<div class="t" style="left:247px;top:458px">此电脑</div>
<div class="t" style="left:247px;top:490px">网络</div>

<!-- file list -->
<div class="a" style="left:489px;top:226px;width:559px;height:22px;background:#cce8ff;border:1px solid #99d1ff"></div>
<div class="t" style="left:492px;top:107px;color:#4c607a">名称</div>
<div class="t" style="left:753px;top:107px;color:#4c607a">修改日期</div>
<div class="t" style="left:897px;top:107px;color:#4c607a">类型</div>
<div class="t" style="left:1017px;top:107px;color:#4c607a">大小</div>
<div class="a" style="left:746px;top:102px;width:1px;height:25px;background:#e5e5e5"></div>
<div class="a" style="left:890px;top:102px;width:1px;height:25px;background:#e5e5e5"></div>
<div class="a" style="left:1010px;top:102px;width:1px;height:25px;background:#e5e5e5"></div>
<div class="a" style="left:1049px;top:102px;width:1px;height:546px;background:#f0f0f0"></div>
<svg class="a" style="left:812px;top:99px" width="12" height="8"><path d="M2 2l4 4l4-4" fill="none" stroke="#8a8a8a" stroke-width="1"/></svg>
<svg class="a" style="left:480px;top:142px" width="14" height="12"><path d="M2 3.5l5 5l5-5" fill="none" stroke="#8a8a8a" stroke-width="1.1"/></svg>
<div class="t" style="left:496px;top:139px;font-size:14px;line-height:18px;color:#1e3287">今天 <span class="l">(4)</span></div>
<div class="a" style="left:556px;top:148px;width:484px;height:1px;background:#e2e2e2"></div>
<svg class="a" style="left:480px;top:258px" width="14" height="12"><path d="M2 3.5l5 5l5-5" fill="none" stroke="#8a8a8a" stroke-width="1.1"/></svg>
<div class="t" style="left:496px;top:255px;font-size:14px;line-height:18px;color:#1e3287">今年的早些时候 <span class="l">(13)</span></div>
<div class="a" style="left:600px;top:264px;width:440px;height:1px;background:#e2e2e2"></div>
<div class="fr" style="left:513px;top:165px;width:230px;overflow:hidden">未确认 <span class="l">311365.crdownload</span></div>
<div class="fr g" style="left:753px;top:165px"><span class="l">2025/11/3 18:41</span></div>
<div class="fr g" style="left:897px;top:165px"><span class="l">CRDOWNLOAD ...</span></div>
<div class="fr g" style="left:968px;top:165px;width:80px;text-align:right;letter-spacing:0.45px;margin-right:-0.45px"><span class="l">13,0</span></div>
<div class="fr" style="left:513px;top:186px;width:230px;overflow:hidden"><span class="l">w64devkit</span></div>
<div class="fr g" style="left:753px;top:186px"><span class="l">2025/11/3 16:34</span></div>
<div class="fr g" style="left:897px;top:186px">应用程序</div>
<div class="fr g" style="left:968px;top:186px;width:80px;text-align:right;letter-spacing:0.45px;margin-right:-0.45px"><span class="l">37,8</span></div>
<div class="fr" style="left:513px;top:207px;width:230px;overflow:hidden"><span class="l">arm-gnu-toolchain</span></div>
<div class="fr g" style="left:753px;top:207px"><span class="l">2025/11/3 15:27</span></div>
<div class="fr g" style="left:897px;top:207px">应用程序</div>
<div class="fr g" style="left:968px;top:207px;width:80px;text-align:right;letter-spacing:0.45px;margin-right:-0.45px"><span class="l">200,2</span></div>
<div class="fr" style="left:513px;top:228px;width:230px;overflow:hidden"><span class="l">lcp067-gcc-bl</span></div>
<div class="fr g" style="left:753px;top:228px"><span class="l">2025/11/3 14:41</span></div>
<div class="fr g" style="left:897px;top:228px">文件夹</div>
<div class="fr" style="left:513px;top:281px;width:230px;overflow:hidden"><span class="l">usbpv</span></div>
<div class="fr g" style="left:753px;top:281px"><span class="l">2025/11/1 9:03</span></div>
<div class="fr g" style="left:897px;top:281px"><span class="l">ZIP</span> 压缩文件</div>
<div class="fr g" style="left:968px;top:281px;width:80px;text-align:right;letter-spacing:0.45px;margin-right:-0.45px"><span class="l">12,0</span></div>
<div class="fr" style="left:513px;top:302px;width:230px;overflow:hidden"><span class="l">stsw-link009</span></div>
<div class="fr g" style="left:753px;top:302px"><span class="l">2025/10/31 9:37</span></div>
<div class="fr g" style="left:897px;top:302px"><span class="l">ZIP</span> 压缩文件</div>
<div class="fr g" style="left:968px;top:302px;width:80px;text-align:right;letter-spacing:0.45px;margin-right:-0.45px"><span class="l">5,2</span></div>
<div class="fr" style="left:513px;top:323px;width:230px;overflow:hidden"><span class="l">WPS_Setup</span></div>
<div class="fr g" style="left:753px;top:323px"><span class="l">2025/10/28 9:25</span></div>
<div class="fr g" style="left:897px;top:323px">应用程序</div>
<div class="fr g" style="left:968px;top:323px;width:80px;text-align:right;letter-spacing:0.45px;margin-right:-0.45px"><span class="l">266,5</span></div>
<div class="fr" style="left:513px;top:344px;width:230px;overflow:hidden"><span class="l">windows-amd64</span></div>
<div class="fr g" style="left:753px;top:344px"><span class="l">2025/10/2 9:10</span></div>
<div class="fr g" style="left:897px;top:344px"><span class="l">ZIP</span> 压缩文件</div>
<div class="fr g" style="left:968px;top:344px;width:80px;text-align:right;letter-spacing:0.45px;margin-right:-0.45px"><span class="l">4,5</span></div>
<div class="fr" style="left:513px;top:365px;width:230px;overflow:hidden"><span class="l">Everything-1.4</span></div>
<div class="fr g" style="left:753px;top:365px"><span class="l">2025/10/2 8:40</span></div>
<div class="fr g" style="left:897px;top:365px">应用程序</div>
<div class="fr g" style="left:968px;top:365px;width:80px;text-align:right;letter-spacing:0.45px;margin-right:-0.45px"><span class="l">1,9</span></div>
<div class="fr" style="left:513px;top:386px;width:230px;overflow:hidden"><span class="l">MDK538</span></div>
<div class="fr g" style="left:753px;top:386px"><span class="l">2025/9/30 17:17</span></div>
<div class="fr g" style="left:897px;top:386px">应用程序</div>
<div class="fr g" style="left:968px;top:386px;width:80px;text-align:right;letter-spacing:0.45px;margin-right:-0.45px"><span class="l">912,4</span></div>
<div class="fr" style="left:513px;top:407px;width:230px;overflow:hidden"><span class="l">breakMDK</span></div>
<div class="fr g" style="left:753px;top:407px"><span class="l">2025/9/28 11:35</span></div>
<div class="fr g" style="left:897px;top:407px"><span class="l">ZIP</span> 压缩文件</div>
<div class="fr" style="left:513px;top:428px;width:230px;overflow:hidden"><span class="l">rustdesk-1.4</span></div>
<div class="fr g" style="left:753px;top:428px"><span class="l">2025/9/26 16:03</span></div>
<div class="fr g" style="left:897px;top:428px"><span class="l">Windows Install...</span></div>
<div class="fr g" style="left:968px;top:428px;width:80px;text-align:right;letter-spacing:0.45px;margin-right:-0.45px"><span class="l">22,7</span></div>
<div class="fr" style="left:513px;top:449px;width:230px;overflow:hidden"><span class="l">VSCodeUserSetup</span></div>
<div class="fr g" style="left:753px;top:449px"><span class="l">2025/9/25 10:13</span></div>
<div class="fr g" style="left:897px;top:449px">应用程序</div>
<div class="fr g" style="left:968px;top:449px;width:80px;text-align:right;letter-spacing:0.45px;margin-right:-0.45px"><span class="l">108,6</span></div>
<div class="fr" style="left:513px;top:470px;width:230px;overflow:hidden"><span class="l">XW16Pro</span></div>
<div class="fr g" style="left:753px;top:470px"><span class="l">2025/9/12 11:29</span></div>
<div class="fr g" style="left:897px;top:470px"><span class="l">ZIP</span> 压缩文件</div>
<div class="fr g" style="left:968px;top:470px;width:80px;text-align:right;letter-spacing:0.45px;margin-right:-0.45px"><span class="l">35,5</span></div>
<div class="fr" style="left:513px;top:491px;width:230px;overflow:hidden"><span class="l">Everything-1.5</span></div>
<div class="fr g" style="left:753px;top:491px"><span class="l">2025/8/28 15:48</span></div>
<div class="fr g" style="left:897px;top:491px">应用程序</div>
<div class="fr g" style="left:968px;top:491px;width:80px;text-align:right;letter-spacing:0.45px;margin-right:-0.45px"><span class="l">1,8</span></div>
<div class="fr" style="left:513px;top:512px;width:230px;overflow:hidden"><span class="l">BANDIZIP-SETUP</span></div>
<div class="fr g" style="left:753px;top:512px"><span class="l">2025/8/25 10:18</span></div>
<div class="fr g" style="left:897px;top:512px">应用程序</div>
<div class="fr g" style="left:968px;top:512px;width:80px;text-align:right;letter-spacing:0.45px;margin-right:-0.45px"><span class="l">7,2</span></div>
<div class="fr" style="left:513px;top:533px;width:230px;overflow:hidden"><span class="l">2020</span>版</div>
<div class="fr g" style="left:753px;top:533px"><span class="l">2025/8/15 19:21</span></div>
<div class="fr g" style="left:897px;top:533px">文件夹</div>
<svg class="a" style="left:493px;top:150px" width="18" height="410">
<defs>
<g id="fdoc"><path d="M2.5 0.5h8l3.5 3.5v11.5h-11.5z" fill="#f7f7f7" stroke="#8a8a8a"/><path d="M10.5 0.5v3.5h3.5" fill="none" stroke="#8a8a8a"/></g>
<g id="fterm"><rect x="1" y="1" width="14" height="11" fill="#000"/><text x="8" y="10" text-anchor="middle" font-family="Liberation Mono" font-weight="bold" font-size="9" fill="#fff">~$</text><rect x="2" y="13" width="12" height="2" fill="#000"/></g>
<g id="fglobe"><circle cx="7.5" cy="8" r="7" fill="#5aa86a"/><circle cx="7.5" cy="8" r="7" fill="#8cc8e8" opacity="0.6"/><rect x="3" y="2" width="9" height="2" fill="#c33"/><path d="M10 9h5v3.5c0 2-2.5 3-2.5 3s-2.5-1-2.5-3z" fill="#f0c020"/><path d="M12.5 9v6.5M10 12h5" stroke="#2060c0" stroke-width="1.1"/></g>
<g id="ffold"><path d="M2 1h10v14h-10z" fill="#fde68f" stroke="#e9c561" stroke-width="0.8"/><rect x="11" y="9" width="2.5" height="6" fill="#f6d87a" stroke="#e9c561" stroke-width="0.6"/></g>
<g id="fzip"><path d="M1 8a7 7 0 0 1 14 0z" fill="#1a7ad6"/><path d="M6 1.5l4 4.5h-2l3 2h-5l1-2h-2z" fill="#fff"/><rect x="1" y="9" width="14" height="6" fill="#1d1d1d"/><text x="8" y="14.5" text-anchor="middle" font-family="Liberation Sans" font-weight="bold" font-size="6.5" fill="#fff">ZIP</text></g>
<g id="fwps"><path d="M2 5l6-3l6 3v8l-6 3l-6-3z" fill="#e8e8e8" stroke="#bbb" stroke-width="0.6"/><rect x="4" y="1" width="8" height="4" fill="#e04040"/><path d="M9 9h5v3c0 2-2.5 3-2.5 3s-2.5-1-2.5-3z" fill="#f0c020"/><path d="M11.5 9v6M9 11.5h5" stroke="#2060c0" stroke-width="1"/></g>
<g id="fevery"><circle cx="10" cy="6" r="4.2" fill="none" stroke="#f07d10" stroke-width="2.4"/><path d="M7 9l-5 5" stroke="#f07d10" stroke-width="2.6"/></g>
<g id="fmdk"><rect x="1" y="1" width="13" height="10" fill="#1a3aa0"/><path d="M2 3l3 3l-3 3M5 3l3 3l-3 3" fill="none" stroke="#fff" stroke-width="1"/><rect x="1" y="10" width="13" height="1.5" fill="#c00"/><path d="M7 8h7v4c0 2.5-3.5 3.5-3.5 3.5s-3.5-1-3.5-3.5z" fill="#f0c020"/><path d="M10.5 8v7.5M7 11.5h7" stroke="#2060c0" stroke-width="1"/></g>
<g id="fmsi"><rect x="5" y="1" width="9" height="9" fill="#9cc" stroke="#555" stroke-width="0.8"/><rect x="6.5" y="2.5" width="6" height="5" fill="#4ab0e0"/><path d="M2 6h5v9h-5z" fill="#ddd" stroke="#666" stroke-width="0.8"/><circle cx="8" cy="12" r="2.5" fill="#3a3"/></g>
<g id="fvsc"><path d="M11.5 0.5l3.5 1.8v11.4l-3.5 1.8l-7-6l-2.8 2.3l-1-0.8v-5.2l1-0.8l2.8 2.3z" fill="#1f8ad2"/><path d="M11.5 4.5v7l-4.2-3.5z" fill="#fff"/><path d="M11.5 0.5l3.5 1.8v11.4l-3.5 1.8z" fill="#25a3ec"/></g>
<g id="fbandi"><circle cx="7" cy="7" r="6" fill="#2a80d0"/><path d="M2 8h10v6h-10z" fill="#ddd" stroke="#888" stroke-width="0.6"/><path d="M9 9h5.5v3c0 2-2.75 3-2.75 3s-2.75-1-2.75-3z" fill="#f0c020"/><path d="M11.75 9v6M9 11.75h5.5" stroke="#2060c0" stroke-width="1"/></g>
</defs>
<use href="#fdoc" x="0" y="15"/>
<use href="#fterm" x="0" y="36"/>
<use href="#fglobe" x="0" y="57"/>
<use href="#ffold" x="0" y="78"/>
<use href="#fzip" x="0" y="131"/>
<use href="#fzip" x="0" y="152"/>
<use href="#fwps" x="0" y="173"/>
<use href="#fzip" x="0" y="194"/>
<use href="#fevery" x="0" y="215"/>
<use href="#fmdk" x="0" y="236"/>
<use href="#fzip" x="0" y="257"/>
<use href="#fmsi" x="0" y="278"/>
<use href="#fvsc" x="0" y="299"/>
<use href="#fzip" x="0" y="320"/>
<use href="#fevery" x="0" y="341"/>
<use href="#fbandi" x="0" y="362"/>
<use href="#ffold" x="0" y="383"/>
</svg>
<div class="a" style="left:475px;top:633px;width:573px;height:16px;background:#f0f0f0"></div>
<div class="a" style="left:492px;top:634px;width:494px;height:14px;background:#cdcdcd"></div>
<svg class="a" style="left:475px;top:633px" width="573" height="16"><path d="M10 4.5l-3.5 3.5l3.5 3.5" fill="none" stroke="#606060" stroke-width="1.6"/><path d="M563 4.5l3.5 3.5l-3.5 3.5" fill="none" stroke="#606060" stroke-width="1.6"/></svg>
<div class="t" style="left:217px;top:652px;color:#333"><span class="l">17</span> 个项目</div>
<div class="a" style="left:281px;top:653px;width:1px;height:16px;background:#f0f0f0"></div>
<div class="t" style="left:291px;top:652px;color:#333">选中 <span class="l">1</span> 个项目</div>
<div class="a" style="left:377px;top:653px;width:1px;height:16px;background:#f0f0f0"></div>
<div class="t" style="left:1158px;top:367px;color:#333">没有预览。</div>
<svg class="a" style="left:1276px;top:648px" width="46" height="25">
<rect x="1.5" y="1.5" width="21" height="22" fill="#d9ebf9" stroke="#3da2e6"/>
<rect x="5" y="6" width="3.5" height="3.5" fill="#fff" stroke="#888" stroke-width="0.7"/><rect x="5" y="10" width="3.5" height="3.5" fill="#fff" stroke="#888" stroke-width="0.7"/><rect x="5" y="14" width="3.5" height="3.5" fill="#fff" stroke="#888" stroke-width="0.7"/>
<rect x="6.3" y="15.3" width="1" height="1" fill="#d00"/><rect x="6.3" y="11.3" width="1" height="1" fill="#36c"/>
<path d="M10 8h4M15.5 8h3.5M10 12h4M15.5 12h3.5M10 16h4M15.5 16h3.5" stroke="#666" stroke-width="1"/>
<rect x="27.5" y="6.5" width="13" height="10" fill="#fff" stroke="#8a8a8a"/>
<rect x="29" y="8" width="10" height="7" fill="#5aa0d8"/><path d="M29 15l3-3l3 1l4-3v5z" fill="#3a7040"/>
</svg>
<!-- context menu -->
<div class="a" style="left:553px;top:190px;width:288px;height:634px;background:#eeeeee;border:1px solid #a0a0a0;box-shadow:2px 2px 2px rgba(0,0,0,0.35)"></div>
<div class="sep" style="top:428px"></div>
<div class="sep" style="top:504px"></div>
<div class="sep" style="top:534px"></div>
<div class="sep" style="top:633px"></div>
<div class="sep" style="top:663px"></div>
<div class="sep" style="top:716px"></div>
<div class="sep" style="top:792px"></div>
<svg class="a" style="left:553px;top:190px" width="288" height="634">
<defs>
<g id="igit"><path d="M8 0.5l3.2 3.2l-3.2 3.2l-3.2-3.2z" fill="#f47a7a"/><path d="M12.3 4.8l3.2 3.2l-3.2 3.2l-3.2-3.2z" fill="#73c95a"/><path d="M8 9.1l3.2 3.2l-3.2 3.2l-3.2-3.2z" fill="#f9dc6b"/><path d="M3.7 4.8l3.2 3.2l-3.2 3.2l-3.2-3.2z" fill="#7aaaf8"/><circle cx="8" cy="8" r="1.3" fill="#eee"/><circle cx="12.3" cy="8" r="1" fill="#eee"/><circle cx="8" cy="11.5" r="1" fill="#eee"/></g>
<g id="ibz"><circle cx="8" cy="8" r="7.3" fill="#1479d6"/><path d="M9.5 2.8l-4.3 5.6h2.8l-1.5 4.8l4.6-6h-2.9z" fill="#fff"/></g>
<g id="iwps"><g transform="translate(0,-2.5) scale(0.34)"><path fill-rule="evenodd" d="M1.5 9.4H46.5Q48.8 9.4 47.8 11.5L33.2 39.5Q31.8 41.8 30.4 39.5L24 27.5L17.6 39.5Q16.2 41.8 14.8 39.5L0.2 11.5Q-0.8 9.4 1.5 9.4ZM8.4 15.6H20.5L14.8 27.5ZM28.2 15.6H40.1L32 30Z" fill="#f23a26"/><path d="M23 9.4H31L17.6 39.5Q16.4 41.5 15.2 39.6L13.8 36.5Z" fill="#f7802a"/></g></g>
<g id="ivsc"><path d="M12 0.5l4 2v11l-4 2l-7.5-6.5l-3 2.5l-1.2-0.8v-5.4l1.2-0.8l3 2.5z" fill="#1f8ad2"/><path d="M12 4.5v7l-4.5-3.5z" fill="#eee"/><path d="M1.3 5.3l1.2-0.8l3 2.5l-2 1.5z" fill="#0c6fb5"/><path d="M12 0.5l4 2v11l-4 2z" fill="#25a3ec"/></g>
</defs>
<use href="#igit" x="11" y="77"/>
<use href="#igit" x="11" y="100"/>
<use href="#ivsc" x="11" y="123"/>
<use href="#ibz" x="11" y="146"/>
<use href="#ibz" x="11" y="169"/>
<use href="#ibz" x="11" y="192"/>
<rect x="11" y="213" width="20" height="20" fill="#0f78d4"/><path d="M21 216c2.5 1.5 4.5 2 7 2v5.5c0 4-3.5 6.5-7 8c-3.5-1.5-7-4-7-8v-5.5c2.5 0 4.5-.5 7-2z" fill="#fff"/><path d="M21 216v15.5M14 223h14" stroke="#0f78d4" stroke-width="1.3"/>
<use href="#iwps" x="11" y="247"/>
<use href="#iwps" x="11" y="270"/>
<use href="#iwps" x="11" y="293"/>
<path d="M13 335a3.5 3.5 0 0 1 1-7a5.5 5.5 0 0 1 10.5 1a3 3 0 0 1 2 6z" fill="#1e8ae6"/><path d="M13 335a3.5 3.5 0 0 1 1-7a4 4 0 0 1 6 2l-3 5z" fill="#2fc4d8"/>
<path d="M270 323l5 6l-5 6" fill="none" stroke="#444" stroke-width="1.1"/>
<path d="M270 353l5 6l-5 6" fill="none" stroke="#444" stroke-width="1.1"/>
<path d="M270 399l5 6l-5 6" fill="none" stroke="#444" stroke-width="1.1"/>
<path d="M270 452l5 6l-5 6" fill="none" stroke="#444" stroke-width="1.1"/>
</svg>
<div class="mi" style="top:198px"><b>打开<span class="l">(O)</span></b></div>
<div class="mi" style="top:221px">在新窗口中打开<span class="l">(E)</span></div>
<div class="mi" style="top:244px">固定到快速访问</div>
<div class="mi" style="top:267px"><span class="l">Open Git GUI here</span></div>
<div class="mi" style="top:290px"><span class="l">Open Git Bash here</span></div>
<div class="mi" style="top:313px">通过 <span class="l">Code</span> 打开</div>
<div class="mi" style="top:336px">压缩为<span class="l">“lcp067-gcc-bl.zip”</span></div>
<div class="mi" style="top:359px">压缩为<span class="l">“lcp067-gcc-bl.7z”</span></div>
<div class="mi" style="top:382px">新建压缩包 <span class="l">(Bandizip)(B)...</span></div>
<div class="mi" style="top:405px">使用 <span class="l">Microsoft Defender</span>扫描<span class="l">...</span></div>
<div class="mi" style="top:435px">文件瘦身</div>
<div class="mi" style="top:458px">批量打印</div>
<div class="mi" style="top:481px">批量重命名</div>
<div class="mi" style="top:511px">上传或同步到<span class="l">WPS</span></div>
<div class="mi" style="top:541px">授予访问权限<span class="l">(G)</span></div>
<div class="mi" style="top:564px">还原以前的版本<span class="l">(V)</span></div>
<div class="mi" style="top:587px">包含到库中<span class="l">(I)</span></div>
<div class="mi" style="top:610px">固定到<span class="l">“</span>开始<span class="l">”</span>屏幕<span class="l">(P)</span></div>
<div class="mi" style="top:640px">发送到<span class="l">(N)</span></div>
<div class="mi" style="top:670px">剪切<span class="l">(T)</span></div>
<div class="mi" style="top:693px">复制<span class="l">(C)</span></div>
<div class="mi" style="top:723px">创建快捷方式<span class="l">(S)</span></div>
<div class="mi" style="top:746px">删除<span class="l">(D)</span></div>
<div class="mi" style="top:769px">重命名<span class="l">(M)</span></div>
<div class="mi" style="top:799px">属性<span class="l">(R)</span></div>
<div class="a" style="left:549px;top:304px;width:287px;height:34px;border:4px solid #ff0000"></div>
<div class="a" style="left:0;top:0;width:1911px;height:7px;background:#f6f6f6"></div>
<div class="a" style="left:0;top:7px;width:1911px;height:2px;background:#cbcbcb"></div>
<div class="a" style="left:10px;top:5px;width:111px;height:3px;background:#e8511d"></div>
</body></html>
